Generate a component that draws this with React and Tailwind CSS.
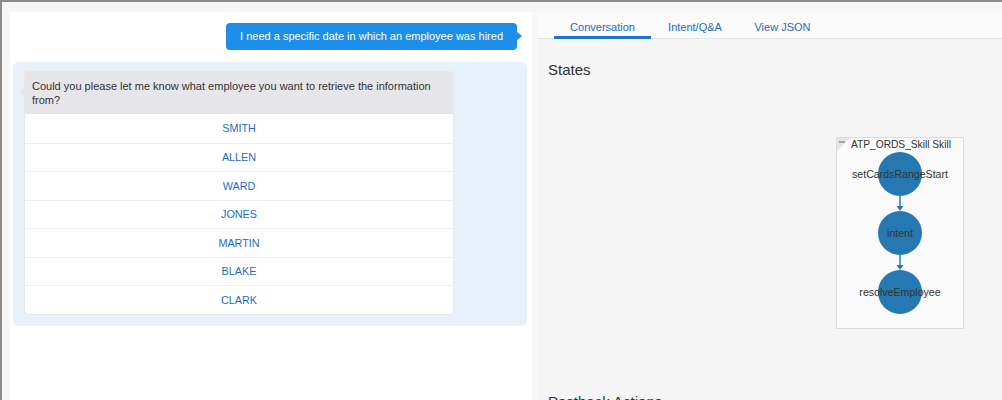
import React from 'react';

const employees = ['SMITH', 'ALLEN', 'WARD', 'JONES', 'MARTIN', 'BLAKE', 'CLARK'];

function StateGraph() {
  const nodes = [
    { y: 37, label: 'setCardsRangeStart' },
    { y: 96, label: 'intent' },
    { y: 155, label: 'resolveEmployee' },
  ];
  return (
    <svg width="128" height="192" viewBox="0 0 128 192" className="block">
      <rect x="0.5" y="0.5" width="127" height="191" fill="#fafafa" stroke="#d9dde2" />
      <path d="M1 1 L14 1 L1 14 Z" fill="#e4e6ea" />
      <line x1="3" y1="5" x2="9" y2="5" stroke="#666" strokeWidth="1" />
      <text x="15" y="11" fontSize="10.2" fill="#333" fontFamily="Liberation Sans, Arial, sans-serif">ATP_ORDS_Skill Skill</text>
      {nodes.map((n) => (
        <circle key={n.label} cx="64" cy={n.y} r="22" fill="#2578b2" />
      ))}
      <line x1="64" y1="59" x2="64" y2="70" stroke="#2578b2" strokeWidth="1.5" />
      <path d="M60.5 69 L64 74 L67.5 69 Z" fill="#2578b2" />
      <line x1="64" y1="118" x2="64" y2="129" stroke="#2578b2" strokeWidth="1.5" />
      <path d="M60.5 128 L64 133 L67.5 128 Z" fill="#2578b2" />
      {nodes.map((n) => (
        <text key={n.label + 't'} x="64" y={n.y + 4} fontSize="10.6" fill="#333" textAnchor="middle" fontFamily="Liberation Sans, Arial, sans-serif">
          {n.label}
        </text>
      ))}
    </svg>
  );
}

export default function App() {
  return (
    <div className="w-[1002px] h-[400px] overflow-hidden flex border-t-2 border-l-2 border-[#8c8c8c] bg-[#f7f7f7] font-['Liberation_Sans',Arial,sans-serif]">
      {/* Chat panel */}
      <div className="w-[522px] mt-[10px] ml-[8px] bg-white flex flex-col shrink-0">
        <div className="flex justify-end pr-[15px] pt-[11px]">
          <div className="relative h-[27px] px-[14px] flex items-center rounded-[4px] bg-[#1e8fe8] text-white text-[11px]">
            I need a specific date in which an employee was hired
            <span className="absolute right-[-5px] top-[8px] w-0 h-0 border-y-[5px] border-y-transparent border-l-[6px] border-l-[#1e8fe8]"></span>
          </div>
        </div>
        <div className="mt-[12px] ml-[3px] mr-[5px] rounded-[6px] bg-[#e8f0f9] pt-[10px] pb-[12px] pl-[12px]">
          <div className="relative w-[428px] rounded-[3px] bg-white shadow-[0_0_0_1px_#e6e8ec]">
            <div className="relative bg-[#e6e6ea] px-[7px] pt-[8px] pb-[7px] h-[42px] text-[11px] leading-[13.5px] text-[#333] rounded-t-[3px]">
              Could you please let me know what employee you want to retrieve the information from?
              <span className="absolute left-[-5px] top-[15px] w-0 h-0 border-y-[5px] border-y-transparent border-r-[5px] border-r-[#e6e6ea]"></span>
            </div>
            {employees.map((name, i) => (
              <div
                key={name}
                className={`h-[28.5px] flex items-center justify-center text-[10.8px] text-[#1f6cbf] ${i > 0 ? 'border-t border-[#eceef1]' : ''}`}
              >
                {name}
              </div>
            ))}
          </div>
        </div>
      </div>

      {/* Inspector panel */}
      <div className="flex-1 mt-[10px] ml-[6px] bg-[#f5f5f5] flex flex-col">
        <div className="h-[27px] bg-[#fafafa] border-b border-[#e2e5e9] flex pl-[16px] text-[11px] text-[#1f6cbf] whitespace-nowrap">
          <div className="w-[97px] flex justify-center pt-[7px] border-b-[3px] border-[#1f74cc] -mb-px">Conversation</div>
          <div className="ml-[16px] w-[56px] flex justify-center pt-[7px]">Intent/Q&amp;A</div>
          <div className="ml-[32px] w-[55px] flex justify-center pt-[7px]">View JSON</div>
        </div>
        <div className="pl-[10px] pt-[22px] text-[15px] text-[#333] leading-[18px]">States</div>
        <div className="flex pl-[298px] mt-[58px]">
          <StateGraph />
        </div>
        <div className="pl-[10px] mt-[64px] text-[15px] text-[#333] leading-[18px]">Postback Actions</div>
      </div>
    </div>
  );
}
